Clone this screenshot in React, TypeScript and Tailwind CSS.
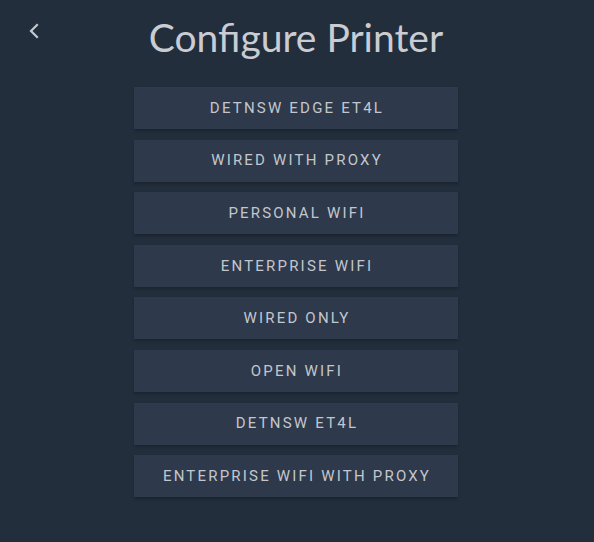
import React from "react";

const items = [
  "DETNSW EDGE ET4L",
  "WIRED WITH PROXY",
  "PERSONAL WIFI",
  "ENTERPRISE WIFI",
  "WIRED ONLY",
  "OPEN WIFI",
  "DETNSW ET4L",
  "ENTERPRISE WIFI WITH PROXY",
];

export default function App() {
  return (
    <div className="w-[594px] h-[542px] bg-[#232e3d] relative overflow-hidden">
      <button className="absolute left-[25px] top-[21px] w-[18px] h-[20px] flex items-center justify-center">
        <svg width="12" height="16" viewBox="0 0 12 16" fill="none">
          <path d="M9 2 L3 8 L9 14" stroke="#c4c9d0" strokeWidth="2.2" strokeLinecap="square" strokeLinejoin="miter" />
        </svg>
      </button>
      <div className="flex flex-col items-center pt-[13px] pr-[2px]">
        <h1 className="text-[39px] leading-[48px] text-[#c9cdd3] font-['Lato',sans-serif] font-normal">
          Configure Printer
        </h1>
        <div className="flex flex-col gap-[10.6px] mt-[26px] w-[324px]">
          {items.map((t) => (
            <button
              key={t}
              className="h-[42px] w-full bg-[#2e394b] text-[#c3c7cd] text-[15px] tracking-[2.2px] font-['Roboto',sans-serif] shadow-[0_2px_3px_rgba(0,0,0,0.25)] flex items-center justify-center pl-[2px]"
            >
              {t}
            </button>
          ))}
        </div>
      </div>
    </div>
  );
}
